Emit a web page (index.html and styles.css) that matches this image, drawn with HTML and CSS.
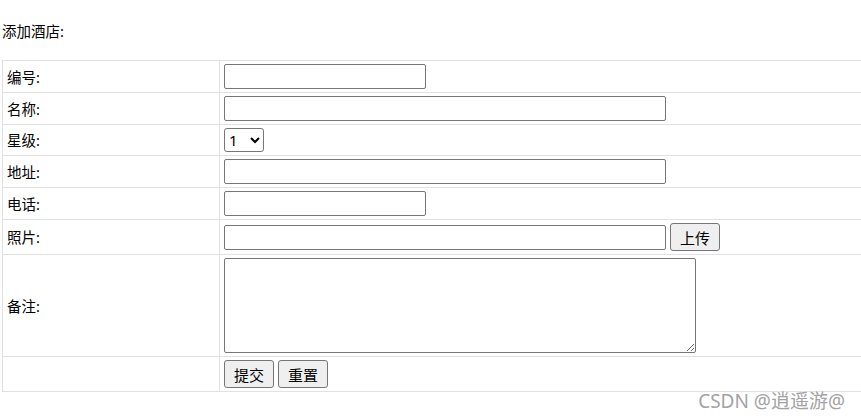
FILE: index.html
```html
<!DOCTYPE html>
<html lang="zh-CN">
<head>
<meta charset="utf-8">
<title>添加酒店</title>
<link rel="stylesheet" href="styles.css">
</head>
<body>
<div class="page">
  <div class="title">添加酒店:</div>
  <table class="form-table">
    <colgroup><col class="c1"><col class="c2"></colgroup>
    <tr>
      <td class="label">编号:</td>
      <td class="field"><div class="f"><input class="inp short" type="text"></div></td>
    </tr>
    <tr>
      <td class="label">名称:</td>
      <td class="field"><div class="f"><input class="inp long" type="text"></div></td>
    </tr>
    <tr>
      <td class="label">星级:</td>
      <td class="field"><div class="f"><select class="sel"><option>1</option><option>2</option><option>3</option><option>4</option><option>5</option></select></div></td>
    </tr>
    <tr>
      <td class="label">地址:</td>
      <td class="field"><div class="f"><input class="inp long" type="text"></div></td>
    </tr>
    <tr>
      <td class="label">电话:</td>
      <td class="field"><div class="f"><input class="inp short" type="text"></div></td>
    </tr>
    <tr>
      <td class="label">照片:</td>
      <td class="field"><div class="f"><input class="inp long" type="text"><button class="btn" type="button">上传</button></div></td>
    </tr>
    <tr>
      <td class="label">备注:</td>
      <td class="field"><div class="f"><textarea class="area"></textarea></div></td>
    </tr>
    <tr>
      <td class="label"></td>
      <td class="field"><div class="f"><button class="btn" type="submit">提交</button><button class="btn" type="reset">重置</button></div></td>
    </tr>
  </table>
  <div class="watermark">CSDN @逍遥游@</div>
</div>
</body>
</html>
```

FILE: styles.css
```css
html, body {
  margin: 0;
  padding: 0;
  background: #fff;
  overflow: hidden;
}
body {
  font-family: "Noto Sans", "Noto Sans CJK SC", sans-serif;
  font-size: 14.5px;
  color: #000;
}
.page {
  position: relative;
  width: 861px;
  height: 419px;
}
.title {
  box-sizing: border-box;
  height: 60px;
  padding: 21px 0 0 2px;
  line-height: 20px;
}
.form-table {
  margin-left: 2px;
  border-collapse: collapse;
  table-layout: fixed;
  width: 880px;
}
.c1 { width: 217px; }
.form-table td {
  border: 1px solid #e1e1e5;
  padding: 3px 4px;
  vertical-align: middle;
}
.label {
  line-height: 20px;
}
.f {
  display: flex;
  align-items: center;
  gap: 4px;
}
.inp {
  box-sizing: border-box;
  height: 25px;
  border: 1px solid #767676;
  border-radius: 2px;
  padding: 1px 2px;
  margin: 0;
  font: inherit;
}
.short { width: 202px; }
.long { width: 442px; }
.sel {
  box-sizing: border-box;
  width: 40px;
  height: 24px;
  margin: 0;
  font-family: inherit;
  font-size: 15px;
  border: 1px solid #767676;
  border-radius: 3px;
  background: #fff;
  color: #000;
}
.area {
  display: block;
  box-sizing: border-box;
  width: 472px;
  height: 95px;
  margin: 0;
  border: 1px solid #767676;
  border-radius: 2px;
  font: inherit;
}
.btn {
  box-sizing: border-box;
  width: 50px;
  height: 28px;
  margin: 0;
  padding: 0;
  border: 1px solid #767676;
  border-radius: 3px;
  background: #efefef;
  font-family: inherit;
  font-size: 15px;
  color: #000;
}
.watermark {
  position: absolute;
  right: 16px;
  top: 390px;
  font-size: 19px;
  line-height: 23px;
  color: #a3a3a3;
  text-shadow: 0 0 2px #fff;
}
```
